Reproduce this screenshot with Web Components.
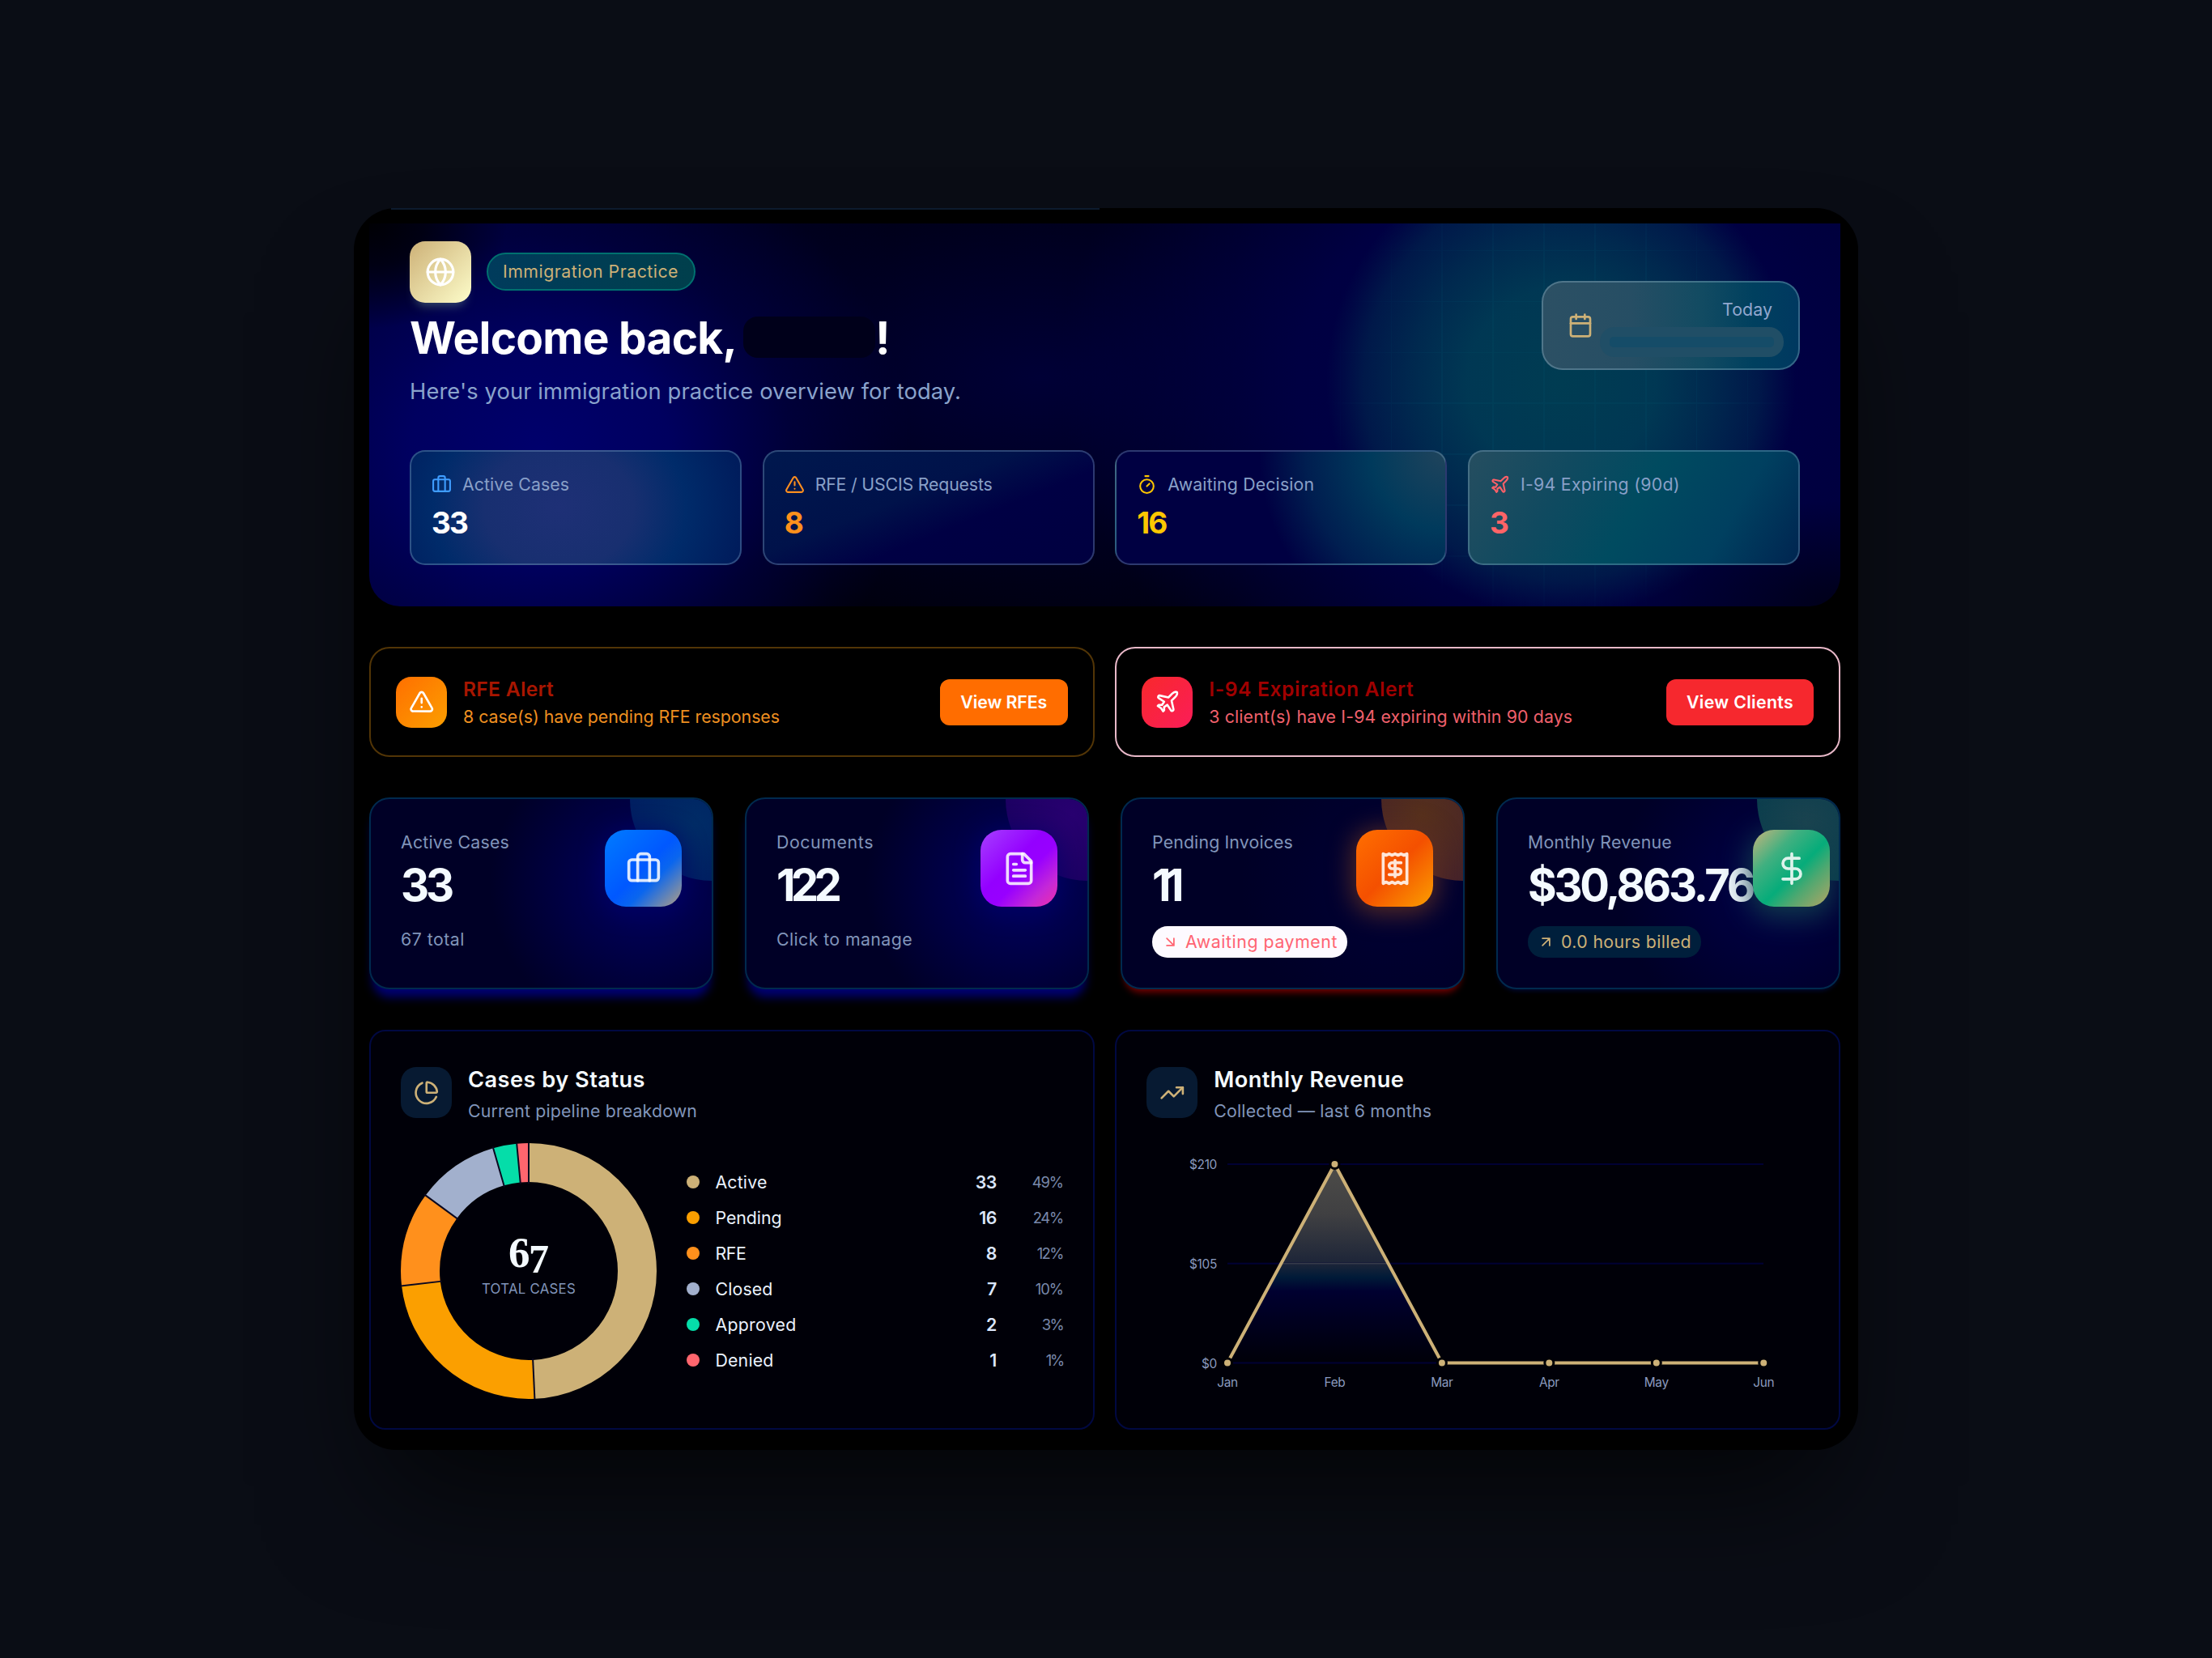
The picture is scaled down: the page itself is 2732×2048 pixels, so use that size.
<!DOCTYPE html>
<html lang="en">
<head>
<meta charset="utf-8">
<title>Immigration Practice</title>
<style>
  :root {
    --gold: #cdb177;
    --muted: #8195ba;
    --text: #f4faff;
  }
  body {
    margin: 0;
    width: 2732px;
    height: 2048px;
    overflow: hidden;
    display: grid;
    place-items: center;
    background: #0a0d15;
    color: var(--text);
    font-family: Inter, "Liberation Sans", sans-serif;
    font-size: 21.3px;
  }
</style>
</head>
<body>
<practice-dashboard></practice-dashboard>

<script>
const ICONS = {
  globe: '<circle cx="12" cy="12" r="10"/><path d="M12 2a14.5 14.5 0 0 0 0 20 14.5 14.5 0 0 0 0-20"/><path d="M2 12h20"/>',
  calendar: '<path d="M8 2v4M16 2v4"/><rect width="18" height="18" x="3" y="4" rx="2"/><path d="M3 10h18"/>',
  briefcase: '<path d="M16 20V4a2 2 0 0 0-2-2h-4a2 2 0 0 0-2 2v16"/><rect width="20" height="14" x="2" y="6" rx="2"/>',
  alert: '<path d="m21.73 18-8-14a2 2 0 0 0-3.48 0l-8 14A2 2 0 0 0 4 21h16a2 2 0 0 0 1.73-3"/><path d="M12 9v4M12 17h.01"/>',
  timer: '<path d="M10 2h4M12 14l3-3"/><circle cx="12" cy="14" r="8"/>',
  plane: '<path d="M17.8 19.2 16 11l3.5-3.5C21 6 21.5 4 21 3c-1-.5-3 0-4.5 1.5L13 8 4.8 6.2c-.5-.1-.9.1-1.1.5l-.3.5c-.2.5-.1 1 .3 1.3L9 12l-2 3H4l-1 1 3 2 2 3 1-1v-3l3-2 3.5 5.3c.3.4.8.5 1.3.3l.5-.2c.4-.3.6-.7.5-1.2z"/>',
  file: '<path d="M15 2H6a2 2 0 0 0-2 2v16a2 2 0 0 0 2 2h12a2 2 0 0 0 2-2V7Z"/><path d="M14 2v4a2 2 0 0 0 2 2h4M10 9H8M16 13H8M16 17H8"/>',
  receipt: '<path d="M4 2v20l2-1 2 1 2-1 2 1 2-1 2 1 2-1 2 1V2l-2 1-2-1-2 1-2-1-2 1-2-1-2 1Z"/><path d="M16 8h-6a2 2 0 1 0 0 4h4a2 2 0 1 1 0 4H8M12 17.5v-11"/>',
  dollar: '<path d="M12 2v20M17 5H9.5a3.5 3.5 0 0 0 0 7h5a3.5 3.5 0 0 1 0 7H6"/>',
  down: '<path d="m7 7 10 10M17 7v10H7"/>',
  up: '<path d="M7 7h10v10M7 17 17 7"/>',
  pie: '<path d="M21 12c.552 0 1.005-.449.95-.998a10 10 0 0 0-8.953-8.951c-.55-.055-.998.398-.998.95v8a1 1 0 0 0 1 1z"/><path d="M21.21 15.89A10 10 0 1 1 8 2.83"/>',
  trend: '<path d="M16 7h6v6"/><path d="m22 7-8.5 8.5-5-5L2 17"/>',
};

// base class: renders its template once into an open shadow root
class DashElement extends HTMLElement {
  connectedCallback() {
    if (this.shadowRoot) return;
    const shadowRoot = this.attachShadow({ mode: "open" });
    const template = document.createElement("template");
    template.innerHTML = this.render();
    shadowRoot.appendChild(template.content.cloneNode(true));
  }
  attr(name) {
    return this.getAttribute(name) || "";
  }
}

class DashIcon extends DashElement {
  render() {
    return `
      <style>
        :host { display: block; flex: none; width: ${this.attr("size")}px; height: ${this.attr("size")}px; }
        svg { display: block; width: 100%; height: 100%; }
      </style>
      <svg viewBox="0 0 24 24" fill="none" stroke="currentColor" stroke-width="2" stroke-linecap="round" stroke-linejoin="round">${ICONS[this.attr("name")]}</svg>`;
  }
}

class HeroTile extends DashElement {
  render() {
    return `
      <style>
        :host {
          flex: 1; box-sizing: border-box; height: 142px; padding: 25px;
          display: flex; flex-direction: column; gap: 7px;
          border: 2px solid rgba(150, 190, 220, .3); border-radius: 19px;
          background: var(--tile) border-box;
        }
        .label { display: flex; align-items: center; gap: 13px; height: 31px; line-height: 31px; color: #89a0c8; }
        dash-icon { color: ${this.attr("icon-color")}; }
        .value { line-height: 50px; font-size: 37px; font-weight: 700; color: ${this.attr("color")}; }
      </style>
      <div class="label"><dash-icon name="${this.attr("icon")}" size="25"></dash-icon><fit-text w="${this.attr("w")}">${this.attr("label")}</fit-text></div>
      <div class="value"><fit-text w="${this.attr("vw")}"><slot></slot></fit-text></div>`;
  }
}

class PracticeHero extends DashElement {
  render() {
    return `
      <style>
        :host {
          display: flex; flex-direction: column; justify-content: space-between;
          box-sizing: border-box; height: 473px; padding: 22px 50px 51px;
          border-radius: 0 0 38px 38px; position: relative; overflow: hidden; isolation: isolate;
          background:
            radial-gradient(ellipse 170px 130px at 0 0, rgba(0,0,4,1) 0%, rgba(0,0,8,.8) 40%, rgba(0,0,16,0) 100%),
            radial-gradient(ellipse 260px 130px at 1816px 473px, rgba(0,0,24,1) 0%, rgba(0,0,32,.7) 40%, rgba(0,0,40,0) 100%),
            radial-gradient(ellipse 290px 290px at 1472px 196px, rgba(0,60,82,1) 0%, rgba(0,58,84,.96) 40%, rgba(0,46,80,.88) 64%, rgba(0,34,76,.72) 84%, rgba(0,20,72,.35) 95%, rgba(0,0,68,0) 100%),
            radial-gradient(ellipse 620px 480px at 1470px 190px, rgba(0,0,72,1) 0%, rgba(0,0,66,1) 52%, rgba(0,0,60,0) 100%),
            radial-gradient(ellipse 460px 390px at 210px 280px, rgba(0,0,108,1) 0%, rgba(0,0,98,.95) 35%, rgba(0,0,70,.6) 68%, rgba(0,0,40,0) 100%),
            radial-gradient(ellipse 600px 300px at 830px 190px, #000036, rgba(0,0,50,0)),
            linear-gradient(100deg, #000040 0%, #00000e 34%, #000014 60%, #000038 100%);
        }
        /* faint graph-paper lines over the right glow */
        .grid {
          position: absolute; inset: 0; z-index: -1; opacity: .12;
          background:
            repeating-linear-gradient(90deg, transparent 0 61.4px, #00607c 61.4px 62.9px) 5px 0,
            repeating-linear-gradient(0deg, transparent 0 61.4px, #00607c 61.4px 62.9px) 0 0;
          -webkit-mask-image: radial-gradient(circle 300px at 1472px 200px, #000 60%, transparent);
          mask-image: radial-gradient(circle 300px at 1472px 200px, #000 60%, transparent);
        }
        .top, .brand, .tiles { display: flex; }
        .top { justify-content: space-between; align-items: center; }
        .brand { align-items: center; gap: 19px; }
        .logo {
          width: 75.5px; height: 75.5px; border-radius: 19px; display: grid; place-items: center;
          color: #fff; background: linear-gradient(135deg, #cdb177, #fdfdca);
          box-shadow: 0 11px 12px -7px rgba(70,95,120,.75);
        }
        .badge {
          box-sizing: border-box; height: 47px; width: 258px; line-height: 43px; text-align: center;
          border: 2px solid #00706f; border-radius: 24px; background: linear-gradient(90deg, #003b5c, #003f4c); color: var(--gold);
        }
        h1 { margin: 13px 0 0; height: 60px; line-height: 60px; font-size: 55px; font-weight: 700; color: #fff; display: flex; align-items: center; }
        .name { width: 163px; height: 51px; margin: 0 0 0 8px; border-radius: 18px; background: #00001a; }
        p { margin: 15px 0 0; line-height: 44px; font-size: 27.3px; color: #8aa3cc; }
        .today {
          box-sizing: border-box; width: 319px; height: 110px; padding: 0 18px 0 30px; border-radius: 26px;
          border: 2px solid rgba(150,190,210,.35); display: flex; align-items: center; justify-content: space-between;
          background: linear-gradient(90deg, #2c5064 0%, #264e64 35%, #124b62 62%, #00405f 82%, #003860 100%) border-box;
          color: var(--gold);
        }
        .date { display: flex; flex-direction: column; align-items: flex-end; color: #92a8cf; padding-top: 1px; }
        .date fit-text { line-height: 36px; margin: 0 14px 4px 0; }
        .blob { box-sizing: border-box; width: 227px; height: 37px; padding: 12px; border-radius: 18px; background: #204e66; }
        .blob i { display: block; height: 13px; border-radius: 5px; background: #154c68; }
        .tiles { gap: 25.5px; }
      </style>
      <div class="grid"></div>
      <div class="top">
        <div>
          <div class="brand">
            <div class="logo"><dash-icon name="globe" size="38"></dash-icon></div>
            <div class="badge"><fit-text w="217">Immigration Practice</fit-text></div>
          </div>
          <h1><fit-text w="404">Welcome back,</fit-text><span class="name"></span>!</h1>
          <p><fit-text w="681">Here's your immigration practice overview for today.</fit-text></p>
        </div>
        <div class="today">
          <dash-icon name="calendar" size="32"></dash-icon>
          <div class="date"><fit-text w="62">Today</fit-text><div class="blob"><i></i></div></div>
        </div>
      </div>
      <div class="tiles">
        <hero-tile icon="briefcase" icon-color="#3f9dff" label="Active Cases" w="132" vw="44" color="#fff"
          style="--tile: radial-gradient(ellipse 230px 190px at 45% 50%, #1e3076 0%, #182f70 40%, #002b6a 68%, #001c5c 100%)">33</hero-tile>
        <hero-tile icon="alert" icon-color="#ff8f1f" label="RFE / USCIS Requests" w="219" vw="23" color="#ff901c"
          style="--tile: linear-gradient(158deg, #00184e 0%, #00124a 42%, #000044 62%, #000040 100%)">8</hero-tile>
        <hero-tile icon="timer" icon-color="#fdc500" label="Awaiting Decision" w="181" vw="36" color="#fdc700"
          style="--tile: radial-gradient(ellipse 230px 240px at 100% 0%, #20445c 0%, #003a5c 40%, #001e50 75%, rgba(0,0,66,0) 100%), #000042">16</hero-tile>
        <hero-tile icon="plane" icon-color="#ff6068" label="I-94 Expiring (90d)" w="197" vw="23" color="#ff6467"
          style="--tile: linear-gradient(120deg, #264e60 0%, #104a60 28%, #004b60 50%, #004060 76%, #002450 100%)">3</hero-tile>
      </div>`;
  }
}

class AlertBanner extends DashElement {
  render() {
    return `
      <style>
        :host {
          flex: 1; box-sizing: border-box; height: 136px; padding: 0 31px; display: flex; align-items: center;
          border: 2px solid var(--line); border-radius: 25px;
        }
        .icon { width: 63px; height: 63px; border-radius: 19px; display: grid; place-items: center; background: var(--icon); color: #fff; }
        .text { flex: 1; padding: 2px 0 0 20px; line-height: 34px; }
        .title { font-size: 24.6px; font-weight: 600; color: var(--title); }
        .sub { color: var(--sub); }
        button {
          width: ${this.attr("bw")}px; height: 57px; padding: 0; border: 0; border-radius: 12px;
          background: var(--button); color: #fff; font: 600 21.3px Inter, sans-serif;
        }
      </style>
      <div class="icon"><dash-icon name="${this.attr("icon")}" size="31.5"></dash-icon></div>
      <div class="text">
        <div class="title"><fit-text w="${this.attr("tw")}">${this.attr("heading")}</fit-text></div>
        <div class="sub"><fit-text w="${this.attr("sw")}"><slot></slot></fit-text></div>
      </div>
      <button><fit-text w="${this.attr("aw")}">${this.attr("action")}</fit-text></button>`;
  }
}

class StatCard extends DashElement {
  render() {
    const note = this.attr("trend")
      ? `<div class="pill"><dash-icon name="${this.attr("trend")}" size="21"></dash-icon><fit-text w="${this.attr("nw")}"><slot></slot></fit-text></div>`
      : `<div class="note"><fit-text w="${this.attr("nw")}"><slot></slot></fit-text></div>`;
    return `
      <style>
        :host {
          position: relative; overflow: hidden; isolation: isolate; box-sizing: border-box;
          width: 425px; height: 237px; padding: 36px 37px 0; display: flex; justify-content: space-between;
          border: 2px solid #002a4e; border-radius: 25px; background: #000026;
          box-shadow: var(--under); white-space: nowrap;
        }
        .disc { position: absolute; z-index: -1; width: 202px; height: 202px; border-radius: 50%; top: -101px; right: -101px; background: var(--disc); }
        .glow { position: absolute; z-index: -2; width: 380px; height: 370px; right: -106px; top: -80px; background: radial-gradient(closest-side, var(--glow) 25%, rgba(0,0,38,0)); }
        .col { flex: none; }
        .label { line-height: 35px; color: var(--muted); }
        .value { margin-top: 7px; line-height: 56px; font-size: 54.5px; font-weight: 700; }
        .note { margin-top: 20px; line-height: 38px; color: var(--muted); }
        .pill {
          display: inline-flex; align-items: center; gap: 8px; box-sizing: border-box; height: 38.5px;
          margin-top: 23px; padding: 0 12px; border-radius: 19px; color: var(--pill-text); background: var(--pill);
        }
        .icon {
          flex: none; width: 95px; height: 95px; margin-top: 2px; border-radius: 26px; display: grid; place-items: center;
          color: rgba(255,255,255,.85); background: var(--icon); box-shadow: var(--halo);
        }
      </style>
      <div class="disc"></div><div class="glow"></div>
      <div class="col">
        <div class="label"><fit-text w="${this.attr("lw")}">${this.attr("label")}</fit-text></div>
        <div class="value"><fit-text w="${this.attr("vw")}">${this.attr("value")}</fit-text></div>
        ${note}
      </div>
      <div class="icon"><dash-icon name="${this.attr("icon")}" size="44"></dash-icon></div>`;
  }
}

class ChartPanel extends DashElement {
  render() {
    return `
      <style>
        :host {
          flex: 1; box-sizing: border-box; height: 494px; padding: 41px 37px 0;
          border: 2px solid #000842; border-radius: 20px; background: #000008;
        }
        header { display: flex; gap: 20px; margin-bottom: 21px; }
        .icon { width: 63px; height: 63px; margin-top: 3px; border-radius: 19px; display: grid; place-items: center; background: #071a32; color: var(--gold); }
        .title { line-height: 38px; font-size: 27.2px; font-weight: 600; }
        .sub { line-height: 38px; color: var(--muted); }
      </style>
      <header>
        <div class="icon"><dash-icon name="${this.attr("icon")}" size="31.5"></dash-icon></div>
        <div>
          <div class="title"><fit-text w="${this.attr("tw")}">${this.attr("heading")}</fit-text></div>
          <div class="sub"><fit-text w="${this.attr("sw")}">${this.attr("sub")}</fit-text></div>
        </div>
      </header>
      <slot></slot>`;
  }
}

class StatusDonut extends DashElement {
  #rows = [
    ["Active", 33, "49%", "#cdb177", 64, 38],
    ["Pending", 16, "24%", "#fb9f00", 82, 37],
    ["RFE", 8, "12%", "#ff901c", 38, 32],
    ["Closed", 7, "10%", "#a2b0cd", 71, 34],
    ["Approved", 2, "3%", "#05dda9", 100, 26],
    ["Denied", 1, "1%", "#ff666e", 72, 21],
  ];

  render() {
    let start = 0;
    let arcs = "";
    let gaps = "";
    for (const [, count, , color] of this.#rows) {
      arcs += `<circle cx="158" cy="158" r="134" pathLength="67" stroke="${color}" stroke-dasharray="${count} 67" stroke-dashoffset="${-start}"/>`;
      gaps += `<path d="M266 158H318" transform="rotate(${(start / 67) * 360} 158 158)"/>`;
      start += count;
    }
    const legend = this.#rows.map(([name, count, pct, color, w, pw]) => `
      <li><i style="background:${color}"></i><fit-text w="${w}">${name}</fit-text><b>${count}</b><span><fit-text w="${pw}">${pct}</fit-text></span></li>`).join("");
    return `
      <style>
        :host { display: flex; align-items: center; gap: 37px; }
        .ring { flex: none; width: 316px; height: 316px; display: grid; }
        .ring > * { grid-area: 1 / 1; }
        .center { display: flex; flex-direction: column; align-items: center; padding-top: 107px; }
        .total { height: 57px; font: 700 53px/57px "Liberation Serif", serif; letter-spacing: -1.5px; }
        /* old-style seven: hangs below the baseline */
        .seven { font-size: 50px; position: relative; top: 7px; letter-spacing: 0; }
        .caption { margin-top: 4px; font-size: 16.8px; line-height: 24px; color: var(--muted); }
        ul { flex: 1; margin: 0; padding: 0; list-style: none; }
        li { display: flex; align-items: center; height: 44.1px; color: #eaf2fc; }
        i { width: 16px; height: 16px; margin-right: 19.5px; border-radius: 50%; }
        b { margin-left: auto; font-weight: 600; color: #dbe6fb; letter-spacing: -.6px; }
        li span { width: 82px; text-align: right; font-size: 18.5px; color: #7888aa; }
      </style>
      <div class="ring">
        <svg width="316" height="316" viewBox="0 0 316 316" fill="none">
          <g stroke-width="48" transform="rotate(-90 158 158)">${arcs}</g>
          <g stroke="#0a0820" stroke-width="2" transform="rotate(-90 158 158)">${gaps}</g>
        </svg>
        <div class="center"><div class="total">6<span class="seven">7</span></div><div class="caption"><fit-text w="116">TOTAL CASES</fit-text></div></div>
      </div>
      <ul>${legend}</ul>`;
  }
}

class RevenueChart extends DashElement {
  render() {
    const months = ["Jan", "Feb", "Mar", "Apr", "May", "Jun"];
    const values = [0, 210, 0, 0, 0, 0];
    const x = (i) => 100 + i * 132.45;
    const y = (v) => 271.5 - (v / 210) * 245.5;
    const points = values.map((v, i) => `${x(i)},${y(v)}`).join(" ");
    return `
      <style>
        :host { display: block; }
        svg { display: block; }
        text { font-size: 15.4px; fill: #8a9abf; letter-spacing: -.3px; }
      </style>
      <svg width="817" height="316" viewBox="0 0 817 316">
        <defs>
          <linearGradient id="area" x1="0" y1="0" x2="0" y2="1">
            <stop offset="0" stop-color="#4d4c49"/>
            <stop offset=".25" stop-color="#404042"/>
            <stop offset=".5" stop-color="#1d2538"/>
            <stop offset=".57" stop-color="#001a38"/>
            <stop offset=".64" stop-color="#000030"/>
            <stop offset=".8" stop-color="#00001e"/>
            <stop offset="1" stop-color="#000008"/>
          </linearGradient>
        </defs>
        <polygon points="${x(0)},271.5 ${points}" fill="url(#area)"/>
        ${[0, 105, 210].map((v) => `
          <path d="M100 ${y(v)}H762" stroke="#000034" stroke-width="1.8"/>
          <text x="87" y="${y(v) + 6}" text-anchor="end">$${v}</text>`).join("")}
        <path d="M168 148.8H297" stroke="#353b49" stroke-width="1.8"/>
        <polyline points="${points}" fill="none" stroke="#cdb177" stroke-width="4" stroke-linejoin="round"/>
        ${months.map((m, i) => `
          <circle cx="${x(i)}" cy="${y(values[i])}" r="5.5" fill="#cdb177" stroke="#000006" stroke-width="3"/>
          <text x="${x(i)}" y="300.6" text-anchor="middle">${m}</text>`).join("")}
      </svg>`;
  }
}

class PracticeDashboard extends DashElement {
  render() {
    return `
      <style>
        :host {
          display: flex; flex-direction: column; gap: 50px; position: relative; box-sizing: border-box;
          width: 1858px; height: 1534px; padding: 19px 22px 24px 19px;
          border-radius: 52px; background: #000; box-shadow: 0 86px 150px -42px rgba(0,0,0,.7);
        }
        /* hairline along the left half of the frame's top edge */
        .edge { position: absolute; top: 0; left: 46px; width: 875px; height: 1.5px; background: #0d1b2e; }
        .row { display: flex; gap: 25.5px; }
        .stats { gap: 0; justify-content: space-between; }
      </style>
      <div class="edge"></div>
      <practice-hero></practice-hero>
      <div class="row">
        <alert-banner icon="alert" heading="RFE Alert" tw="112" sw="391" action="View RFEs" aw="107" bw="158"
          style="--line:#523506; --icon:linear-gradient(135deg,#ff6f00,#fb9f00); --title:#a81600; --sub:#ee8f20; --button:#ff6d00">8 case(s) have pending RFE responses</alert-banner>
        <alert-banner icon="plane" heading="I-94 Expiration Alert" tw="253" sw="449" action="View Clients" aw="132" bw="182"
          style="--line:#e8b8c8; --icon:linear-gradient(135deg,#f8282c,#fb1d58); --title:#a00000; --sub:#f0606c; --button:#f6282e">3 client(s) have I-94 expiring within 90 days</alert-banner>
      </div>
      <div class="row stats">
        <stat-card icon="briefcase" label="Active Cases" lw="134" value="33" vw="62" nw="79"
          style="--under:0 14px 12px -4px #000070; --disc:radial-gradient(circle at 40% 65%, #002c66, #001c60 55%, #000058); --glow:#000054; --icon:linear-gradient(135deg,#007cff 0%,#0058ff 50%,#0a66ee 65%,#ac9c88 98%); --halo:0 4px 30px rgba(0,0,110,.8)">67 total</stat-card>
        <stat-card icon="file" label="Documents" lw="120" value="122" vw="75" nw="168"
          style="--under:0 14px 12px -4px #000070; --disc:radial-gradient(circle at 40% 60%, #280070, #1c0062 50%, #000058 68%); --glow:#000054; --icon:linear-gradient(135deg,#a640ff 0%,#9400ff 42%,#9800ff 58%,#c428d8 80%,#f030a8 100%); --halo:0 4px 30px rgba(0,0,110,.8)">Click to manage</stat-card>
        <stat-card icon="receipt" label="Pending Invoices" lw="174" value="11" vw="32" trend="down" nw="188"
          style="--under:0 9px 8px -5px #720000; --disc:radial-gradient(circle at 25% 60%, #56301c, #42202c 55%, #30102c); --glow:#000032; --icon:linear-gradient(135deg,#ff6f00 0%,#f45000 50%,#fb9f00 100%); --halo:0 4px 30px 5px rgba(96,48,34,.85); --pill:#fdfaff; --pill-text:#ff6472">Awaiting payment</stat-card>
        <stat-card icon="dollar" label="Monthly Revenue" lw="178" value="$30,863.76" vw="278" trend="up" nw="161"
          style="--under:0 4px 6px -3px #000c40; --disc:radial-gradient(circle at 30% 65%, #1c4450, #003a4c 60%); --glow:#000040; --icon:linear-gradient(135deg,#c8b47c 0%,#40b080 30%,#06ac7a 55%,#50a870 72%,#b4a464 100%); --halo:0 8px 34px 5px rgba(18,64,78,.9); --pill:#001f3c; --pill-text:#cdb177">0.0 hours billed</stat-card>
      </div>
      <div class="row">
        <chart-panel icon="pie" heading="Cases by Status" tw="219" sub="Current pipeline breakdown" sw="283"><status-donut></status-donut></chart-panel>
        <chart-panel icon="trend" heading="Monthly Revenue" tw="235" sub="Collected — last 6 months" sw="269"><revenue-chart></revenue-chart></chart-panel>
      </div>`;
  }
}

// tracks its text out or in so that the run is exactly w pixels wide
class FitText extends HTMLElement {
  constructor() {
    super();
    this.attachShadow({ mode: "open" }).innerHTML = `
      <style>:host { display: inline-block; white-space: nowrap; }</style><slot></slot>`;
  }
  connectedCallback() {
    const slot = this.querySelector("slot");
    const text = slot ? slot.assignedNodes().map((n) => n.textContent).join("") : this.textContent;
    const width = parseFloat(this.getAttribute("w"));
    const count = text.trim().length;
    if (!width || count < 2) return;
    const natural = this.getBoundingClientRect().width;
    this.style.letterSpacing = `${(width - natural) / count}px`;
  }
}

customElements.define("dash-icon", DashIcon);
customElements.define("hero-tile", HeroTile);
customElements.define("practice-hero", PracticeHero);
customElements.define("alert-banner", AlertBanner);
customElements.define("stat-card", StatCard);
customElements.define("chart-panel", ChartPanel);
customElements.define("status-donut", StatusDonut);
customElements.define("revenue-chart", RevenueChart);
customElements.define("practice-dashboard", PracticeDashboard);
// last, so every run of text already has its final font when measured
customElements.define("fit-text", FitText);
</script>
</body>
</html>
